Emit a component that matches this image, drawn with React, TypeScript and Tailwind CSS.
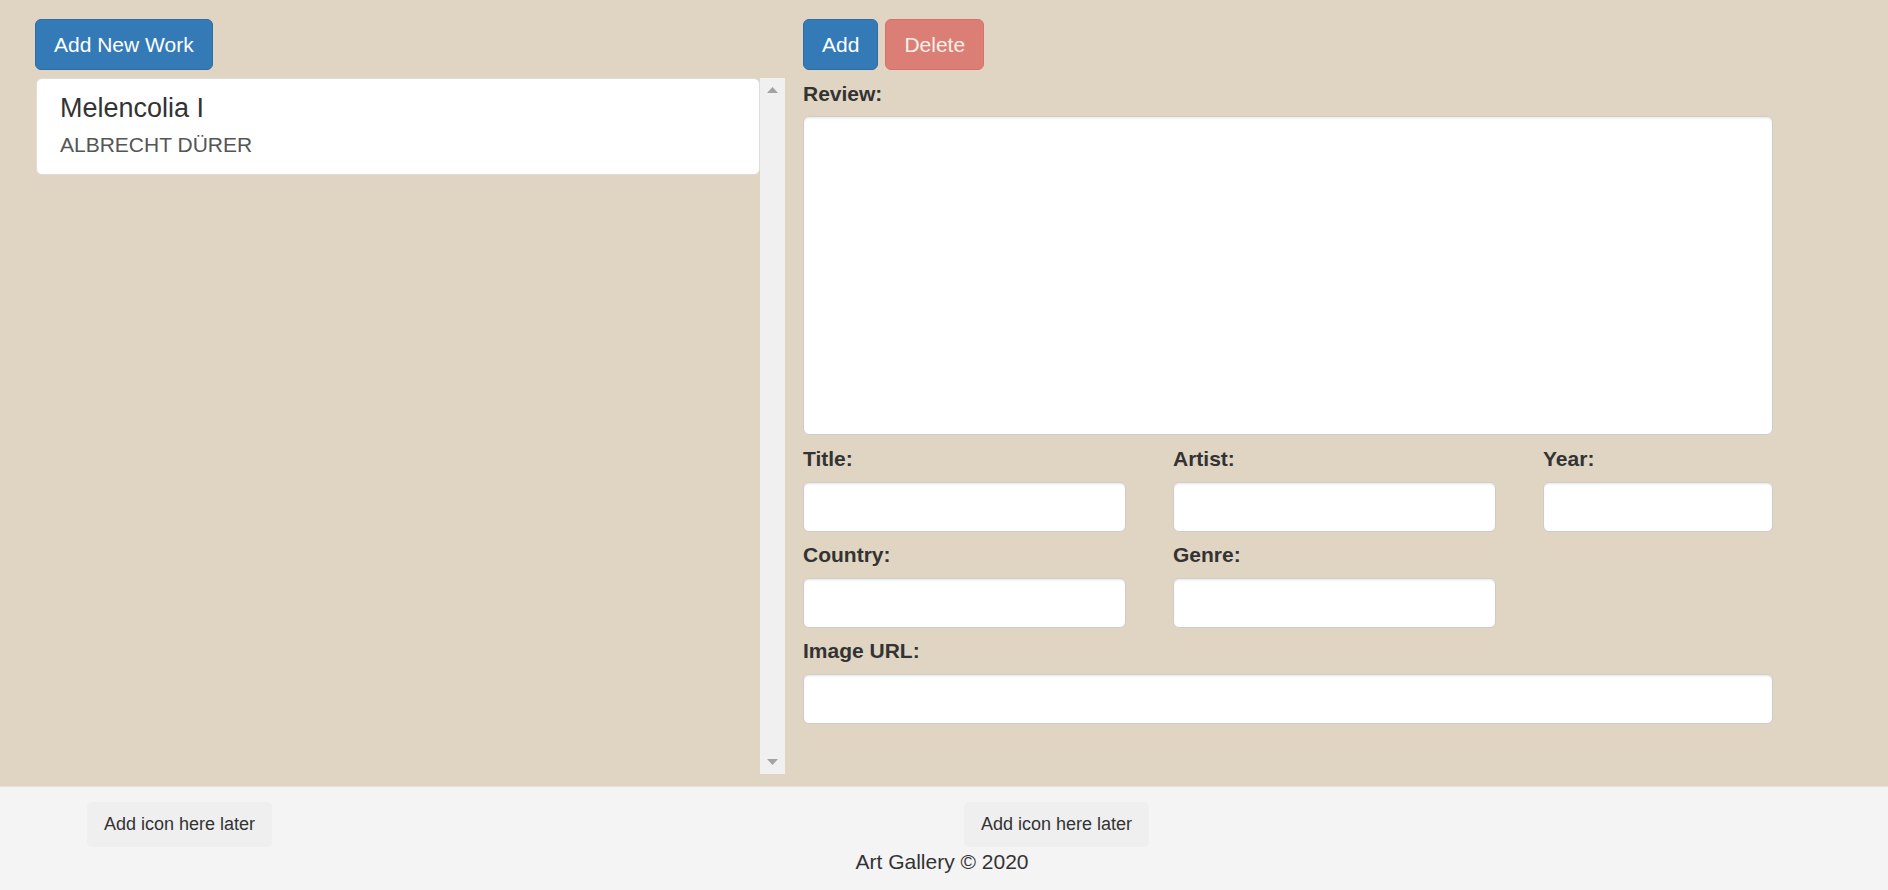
import React from "react";

const font = { fontFamily: '"Liberation Sans", Arial, Helvetica, sans-serif' };

function Field({ label, className = "" }: { label: string; className?: string }) {
  return (
    <div className={"flex flex-col " + className}>
      <label className="block text-[21px] leading-[30px] font-bold text-[#333] mb-[8px]">{label}</label>
      <input
        type="text"
        className="block h-[50px] w-full bg-white border border-[#cccccc] rounded-[6px] shadow-[inset_0_1.5px_1.5px_rgba(0,0,0,0.075)] outline-none px-[18px] text-[21px]"
      />
    </div>
  );
}

export default function App() {
  return (
    <div style={font} className="w-[1888px] h-[890px] overflow-hidden text-[#333] bg-[#f4f4f4]">
      <main className="flex h-[786px] bg-[#e0d4c2] pl-[35px] pt-[19px]">
        {/* Left column */}
        <section className="w-[750px] flex flex-col">
          <div className="flex">
            <button className="h-[51px] px-[18px] bg-[#337ab7] border border-[#2e6da4] rounded-[6px] text-white text-[21px] leading-[30px]">
              Add New Work
            </button>
          </div>
          <div className="mt-[8px] h-[696px] flex">
            <div className="flex-1 pl-[1px]">
              <div className="bg-white border border-[#dddddd] rounded-[6px] pt-[14px] pb-[14px] px-[23px]">
                <h4 className="text-[27px] leading-[30px] font-normal text-[#333]">Melencolia I</h4>
                <p className="mt-[7px] text-[21px] leading-[30px] text-[#555] uppercase">Albrecht Dürer</p>
              </div>
            </div>
            <div className="w-[25px] bg-[#f0f0f0] flex flex-col items-center justify-between pt-[9px] pb-[9px]">
              <svg width="11" height="6" viewBox="0 0 11 6">
                <polygon points="5.5,0 11,6 0,6" fill="#a3a3a3" />
              </svg>
              <svg width="11" height="6" viewBox="0 0 11 6">
                <polygon points="0,0 11,0 5.5,6" fill="#a3a3a3" />
              </svg>
            </div>
          </div>
        </section>

        {/* Right column */}
        <section className="w-[970px] ml-[18px] flex flex-col">
          <div className="flex gap-[7px]">
            <button className="h-[51px] px-[18px] bg-[#337ab7] border border-[#2e6da4] rounded-[6px] text-white text-[21px] leading-[30px]">
              Add
            </button>
            <button className="h-[51px] px-[18px] bg-[#d9534f] border border-[#d43f3a] rounded-[6px] text-white text-[21px] leading-[30px] opacity-65">
              Delete
            </button>
          </div>
          <div className="mt-[9px] flex flex-col">
            <label className="block text-[21px] leading-[30px] font-bold text-[#333] mb-[7px]">Review:</label>
            <textarea className="block h-[319px] w-full bg-white border border-[#cccccc] rounded-[6px] shadow-[inset_0_1.5px_1.5px_rgba(0,0,0,0.075)] outline-none resize-none" />
          </div>
          <div className="mt-[9px] grid grid-cols-[323px_323px_230px] gap-x-[47px] gap-y-[8px]">
            <Field label="Title:" />
            <Field label="Artist:" />
            <Field label="Year:" />
            <Field label="Country:" />
            <Field label="Genre:" />
            <div />
            <Field label="Image URL:" className="col-span-3" />
          </div>
        </section>
      </main>

      <footer className="bg-[#f4f4f4] border-t border-[#e2e2e2] pt-[15px]">
        <div className="grid grid-cols-2">
          <div className="pl-[87px]">
            <button className="h-[45px] px-[17px] bg-[#efefef] rounded-[5px] text-[18px] leading-[27px] text-[#333]">
              Add icon here later
            </button>
          </div>
          <div className="pl-[20px]">
            <button className="h-[45px] px-[17px] bg-[#efefef] rounded-[5px] text-[18px] leading-[27px] text-[#333]">
              Add icon here later
            </button>
          </div>
        </div>
        <p className="text-center text-[21px] leading-[30px] text-[#333] pr-[4px]">Art Gallery © 2020</p>
      </footer>
    </div>
  );
}
